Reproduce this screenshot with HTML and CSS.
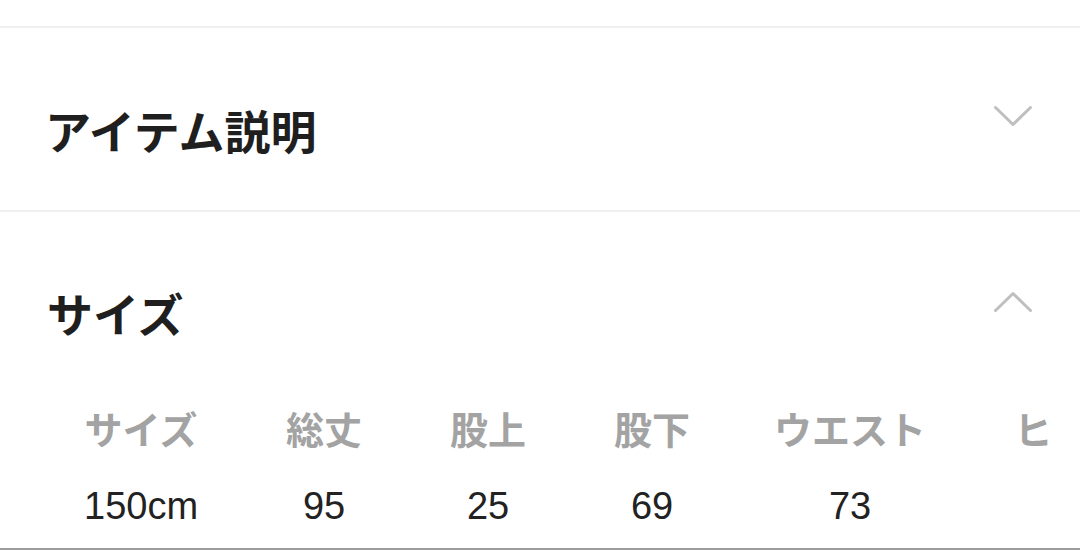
FILE: index.html
```html
<!DOCTYPE html>
<html lang="ja">
<head>
  <meta charset="UTF-8">
  <meta name="viewport" content="width=device-width, initial-scale=1.0">
  <title>アイテム詳細</title>
  <link rel="stylesheet" href="styles.css">
</head>
<body>
  <div class="top-gap"></div>

  <section class="panel">
    <div class="panel-head first">
      <h2 class="panel-title">アイテム説明</h2>
      <svg class="chevron" width="40" height="22" viewBox="0 0 40 22">
        <polyline points="2.5,2.5 20,19.5 37.5,2.5" />
      </svg>
    </div>
  </section>

  <section class="panel open">
    <div class="panel-head">
      <h2 class="panel-title">サイズ</h2>
      <svg class="chevron" width="40" height="22" viewBox="0 0 40 22">
        <polyline points="2.5,19.5 20,2.5 37.5,19.5" />
      </svg>
    </div>
    <div class="size-scroll">
      <table class="size-table">
        <thead>
          <tr>
            <th>サイズ</th>
            <th>総丈</th>
            <th>股上</th>
            <th>股下</th>
            <th class="wide">ウエスト</th>
            <th>ヒップ</th>
          </tr>
        </thead>
        <tbody>
          <tr>
            <td>150cm</td>
            <td>95</td>
            <td>25</td>
            <td>69</td>
            <td class="wide">73</td>
            <td>88</td>
          </tr>
        </tbody>
      </table>
    </div>
  </section>
</body>
</html>
```

FILE: styles.css
```css
html, body {
  margin: 0;
  padding: 0;
}
body {
  font-family: "Liberation Sans", "Noto Sans CJK JP", sans-serif;
  background: #fff;
  color: #1f1f1f;
  height: 550px;
  overflow: hidden;
}
.top-gap {
  height: 26px;
  border-bottom: 2px solid #f0f0f0;
}
.panel {
  border-bottom: 2px solid #f0f0f0;
}
.panel.open {
  border-bottom: 2px solid #9c9c9c;
}
.panel-head {
  display: flex;
  align-items: flex-start;
  justify-content: space-between;
  padding: 77px 47px 0 47px;
}
.panel-head.first {
  padding-top: 78px;
  padding-bottom: 58px;
  padding-left: 45px;
}
.panel-title {
  margin: 0;
  font-family: "Noto Sans CJK JP", sans-serif;
  font-size: 46px;
  line-height: 46px;
  font-weight: 700;
  color: #1f1f1f;
}
.chevron {
  margin-top: -1px;
  fill: none;
  stroke: #bfbfbf;
  stroke-width: 3;
  stroke-linecap: round;
  stroke-linejoin: round;
}
.panel.open .chevron {
  margin-top: 2px;
}
.size-scroll {
  overflow: hidden;
  margin: 58px 32px 0 40px;
}
.size-table {
  border-collapse: collapse;
  white-space: nowrap;
  font-size: 38px;
}
.size-table th,
.size-table td {
  padding: 0 44px;
  text-align: center;
}
.size-table .wide {
  padding-left: 40px;
}
.size-table th {
  height: 76px;
  line-height: 76px;
  font-weight: 700;
  color: #a3a3a3;
}
.size-table td {
  height: 79px;
  line-height: 74px;
  vertical-align: top;
  color: #222;
}
```
